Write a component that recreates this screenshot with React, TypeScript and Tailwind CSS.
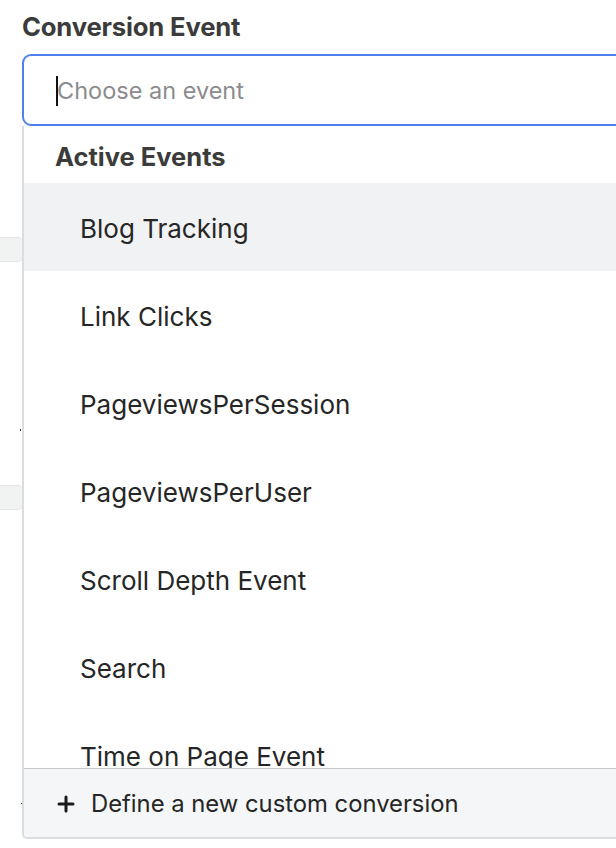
import React from "react";

const items = [
  "Blog Tracking",
  "Link Clicks",
  "PageviewsPerSession",
  "PageviewsPerUser",
  "Scroll Depth Event",
  "Search",
  "Time on Page Event",
];

export default function App() {
  return (
    <div
      className="relative w-[616px] h-[848px] overflow-hidden bg-white"
      style={{ fontFamily: "Inter, 'Noto Sans', sans-serif" }}
    >
      {/* underlying page residue */}
      <div className="absolute left-[-20px] top-[237px] h-[25px] w-[44px] rounded-[6px] border border-[#e4e6e6] bg-[#f1f2f2]" />
      <div className="absolute left-[-20px] top-[485px] h-[25px] w-[44px] rounded-[6px] border border-[#e4e6e6] bg-[#f1f2f2]" />
      <div className="absolute left-[20px] top-[429px] h-[2px] w-[1px] bg-[#333]" />
      <div className="absolute left-[21px] top-[803px] h-[1px] w-[1px] bg-[#555]" />

      <div className="relative pl-[22px] pt-[9px]">
        <div className="h-[36px] text-[25.7px] font-bold leading-[36px] text-[#3b3b3b] tracking-[-0.2px]">
          Conversion Event
        </div>
        <div className="mt-[9px] flex h-[72px] w-[640px] items-center rounded-[9px] border-2 border-[#4f80ee] bg-white pl-[32px] pt-[2px]">
          <span className="h-[30px] w-[2px] bg-[#111]" />
          <span className="-ml-[1px] text-[23.5px] text-[#8b8b8f]">Choose an event</span>
        </div>
        <div className="w-[640px] overflow-hidden rounded-bl-[5px] border-b-2 border-l-2 border-[#dcdde1] bg-white">
          <div className="flex h-[57px] items-center pl-[31px] pt-[5px] text-[25.5px] font-bold text-[#3b3b3b]">
            Active Events
          </div>
          <div className="h-[585px] overflow-hidden">
            {items.map((t, i) => (
              <div
                key={t}
                className={
                  i === 0
                    ? "flex h-[88px] items-center bg-[#f1f2f4] pl-[56px] pt-[2px] text-[26px] text-[#262626]"
                    : "flex h-[88px] items-center pl-[56px] pt-[2px] text-[26px] text-[#262626]"
                }
              >
                {t}
              </div>
            ))}
          </div>
          <div className="flex h-[69px] items-center border-t border-[#c9c9c9] bg-[#f5f6f7] pl-[33px] pt-[2px] text-[23.8px] text-[#262626]">
            <svg width="18" height="18" viewBox="0 0 18 18" className="mr-[16px]">
              <path d="M9 2v14M2 9h14" stroke="#1a1a1a" strokeWidth="3" strokeLinecap="round" />
            </svg>
            Define a new custom conversion
          </div>
        </div>
      </div>
    </div>
  );
}
